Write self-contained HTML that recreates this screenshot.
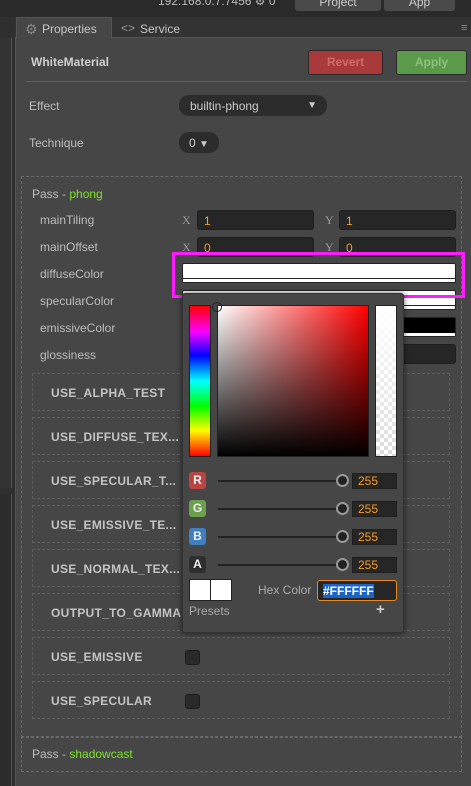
<!DOCTYPE html><html><head><style>
*{box-sizing:border-box;margin:0;padding:0}
body{width:471px;height:786px;background:#3c3c3c;font-family:"Liberation Sans",sans-serif;font-size:12px;color:#ccc;position:relative;overflow:hidden}
.a{position:absolute}
.lbl{position:absolute;font-size:12px;color:#bdbdbd}
.inp{position:absolute;background:#262626;border:1px solid #1e1e1e;border-radius:3px;color:#f39c2a;font-size:12px;padding:3px 6px;height:20px}
.xy{position:absolute;font-family:"Liberation Serif",serif;color:#999;font-size:12px}
.def{position:absolute;left:32px;width:418px;height:38px;border:1px dashed #5e5e5e}
.def span{position:absolute;left:18px;top:12px;font-weight:bold;color:#c4c4c4;font-size:12px;letter-spacing:.3px}
.col{position:absolute;left:182px;width:274px;height:20px;border:1px solid #222;border-radius:2px;background:#fff}
.col i{position:absolute;left:0;right:0;bottom:3px;height:1px;background:#222}
.badge{position:absolute;left:189px;width:17px;height:17px;border-radius:3px;color:#eee;font-weight:bold;font-size:12px;text-align:center;line-height:17px}
.trk{position:absolute;left:218px;width:124px;height:2px;background:#222}
.knob{position:absolute;left:336px;width:13px;height:13px;border-radius:50%;background:#222;border:2px solid #999}
.num{position:absolute;left:352px;width:45px;height:16px;background:#262626;border:1px solid #1e1e1e;color:#f39c2a;font-size:12px;padding:1px 5px;line-height:13px}
</style></head><body>
<div class="a" style="left:0;top:0;width:471px;height:17px;background:#2a2a2a"></div>
<div class="a" style="left:158px;top:-6px;color:#bbb;font-size:12px">192.168.0.7:7456 &#9881; 0</div>
<div class="a" style="left:295px;top:-2px;width:86px;height:13px;background:#4a4a4a;border-radius:3px;color:#ccc;text-align:center;font-size:12px;line-height:8px">Project</div>
<div class="a" style="left:384px;top:-2px;width:71px;height:13px;background:#4a4a4a;border-radius:3px;color:#ccc;text-align:center;font-size:12px;line-height:8px">App</div>
<div class="a" style="left:0;top:17px;width:15px;height:769px;background:#2f2f2f"></div>
<div class="a" style="left:0;top:38px;width:12px;height:450px;background:#333;border-right:1px solid #555"></div>
<div class="a" style="left:0;top:494px;width:12px;height:292px;background:#2c2c2c;border-right:1px solid #555"></div>
<div class="a" style="left:15px;top:17px;width:456px;height:769px;background:#464646;border-left:1px solid #555"></div>
<div class="a" style="left:15px;top:17px;width:456px;height:21px;background:#333;border-bottom:1px solid #555"></div>
<div class="a" style="left:16px;top:17px;width:96px;height:22px;background:#464646;border:1px solid #555;border-bottom:none"></div>
<div class="a" style="left:25px;top:21px;color:#888;font-size:14px">&#9881;</div>
<div class="a" style="left:42px;top:22px;color:#c8c8c8;font-size:12px">Properties</div>
<div class="a" style="left:121px;top:21px;color:#999;font-size:12px">&lt;&gt;</div>
<div class="a" style="left:140px;top:22px;color:#c8c8c8;font-size:12px">Service</div>
<div class="a" style="left:461px;top:22px;color:#888;font-size:11px">&#8801;</div>
<div class="a" style="left:31px;top:55px;font-weight:bold;color:#d0d0d0;font-size:12px">WhiteMaterial</div>
<div class="a" style="left:308px;top:50px;width:75px;height:25px;background:#a83a3c;border:1px solid #2a2a2a;border-radius:3px;color:#d06a6a;font-weight:bold;text-align:center;line-height:23px">Revert</div>
<div class="a" style="left:396px;top:50px;width:71px;height:25px;background:#5a9a4a;border:1px solid #2a2a2a;border-radius:3px;color:#8cc27c;font-weight:bold;text-align:center;line-height:23px">Apply</div>
<div class="a" style="left:26px;top:81px;width:441px;height:1px;background:#5e5e5e"></div>
<div class="lbl" style="left:29px;top:99px">Effect</div>
<div class="a" style="left:179px;top:95px;width:148px;height:21px;background:#2c2c2c;border-radius:10px;color:#ccc;padding:4px 11px">builtin-phong<span style="position:absolute;right:10px;top:5px;font-size:10px">&#9660;</span></div>
<div class="lbl" style="left:29px;top:136px">Technique</div>
<div class="a" style="left:179px;top:132px;width:40px;height:21px;background:#2c2c2c;border-radius:10px;color:#ccc;padding:4px 10px">0 <span style="font-size:10px">&#9660;</span></div>
<div class="a" style="left:21px;top:176px;width:441px;height:562px;border:1px dashed #6a6a6a"></div>
<div class="lbl" style="left:32px;top:187px">Pass - <span style="color:#7ee42e">phong</span></div>
<div class="lbl" style="left:40px;top:213px">mainTiling</div>
<div class="lbl" style="left:40px;top:240px">mainOffset</div>
<div class="lbl" style="left:40px;top:267px">diffuseColor</div>
<div class="lbl" style="left:40px;top:294px">specularColor</div>
<div class="lbl" style="left:40px;top:321px">emissiveColor</div>
<div class="lbl" style="left:40px;top:348px">glossiness</div>
<div class="xy" style="left:182px;top:213px">X</div><div class="inp" style="left:197px;top:210px;width:117px">1</div>
<div class="xy" style="left:325px;top:213px">Y</div><div class="inp" style="left:339px;top:210px;width:117px">1</div>
<div class="xy" style="left:182px;top:240px">X</div><div class="inp" style="left:197px;top:237px;width:117px">0</div>
<div class="xy" style="left:325px;top:240px">Y</div><div class="inp" style="left:339px;top:237px;width:117px">0</div>
<div class="col" style="top:263px"><i></i></div>
<div class="col" style="top:290px"><i></i></div>
<div class="col" style="top:317px;background:#000"><i style="background:#fff;height:3px;bottom:0"></i></div>
<div class="inp" style="left:182px;top:344px;width:274px"></div>
<div class="a" style="left:172px;top:252px;width:293px;height:46px;border:3px solid #ff1aff"></div>
<div class="def" style="top:373px"><span>USE_ALPHA_TEST</span></div>
<div class="def" style="top:417px"><span>USE_DIFFUSE_TEX...</span></div>
<div class="def" style="top:461px"><span>USE_SPECULAR_T...</span></div>
<div class="def" style="top:505px"><span>USE_EMISSIVE_TE...</span></div>
<div class="def" style="top:549px"><span>USE_NORMAL_TEX...</span></div>
<div class="def" style="top:593px"><span>OUTPUT_TO_GAMMA</span></div>
<div class="def" style="top:637px"><span>USE_EMISSIVE</span></div>
<div class="def" style="top:681px"><span>USE_SPECULAR</span></div>
<div class="a" style="left:185px;top:650px;width:15px;height:15px;background:#2a2a2a;border:1px solid #1c1c1c;border-radius:3px"></div>
<div class="a" style="left:185px;top:694px;width:15px;height:15px;background:#2a2a2a;border:1px solid #1c1c1c;border-radius:3px"></div>
<div class="a" style="left:21px;top:736px;width:441px;height:36px;border:1px dashed #6a6a6a"></div>
<div class="lbl" style="left:32px;top:747px">Pass - <span style="color:#7ee42e">shadowcast</span></div>
<div class="a" style="left:182px;top:293px;width:222px;height:340px;background:#464646;border:1px solid #333;border-radius:3px;box-shadow:0 0 6px rgba(0,0,0,.6)"></div>
<div class="a" style="left:189px;top:305px;width:22px;height:152px;border:1px solid #222;background:linear-gradient(#f00,#f0f 17%,#00f 33%,#0ff 50%,#0f0 67%,#ff0 83%,#f00)"></div>
<div class="a" style="left:217px;top:305px;width:152px;height:152px;border:1px solid #222;background:linear-gradient(rgba(0,0,0,0),#000),linear-gradient(90deg,#fff,#f00)"></div>
<div class="a" style="left:212px;top:302px;width:10px;height:10px;border:1.5px solid #222;border-radius:50%"></div>
<div class="a" style="left:375px;top:305px;width:22px;height:152px;border:1px solid #222;background:linear-gradient(#fff,rgba(255,255,255,.3)),repeating-conic-gradient(#ccc 0 25%,#fff 0 50%) 0 0/8px 8px"></div>
<div class="badge" style="top:472px;background:#b84444">R</div>
<div class="badge" style="top:500px;background:#6aa04e">G</div>
<div class="badge" style="top:528px;background:#3f7fc0">B</div>
<div class="badge" style="top:556px;background:#2e2e2e">A</div>
<div class="trk" style="top:480px"></div><div class="knob" style="top:474px"></div><div class="num" style="top:473px">255</div>
<div class="trk" style="top:508px"></div><div class="knob" style="top:502px"></div><div class="num" style="top:501px">255</div>
<div class="trk" style="top:536px"></div><div class="knob" style="top:530px"></div><div class="num" style="top:529px">255</div>
<div class="trk" style="top:564px"></div><div class="knob" style="top:558px"></div><div class="num" style="top:557px">255</div>
<div class="a" style="left:189px;top:579px;width:43px;height:22px;background:#fff;border:1px solid #222"></div>
<div class="a" style="left:210px;top:579px;width:1px;height:22px;background:#222"></div>
<div class="a" style="left:258px;top:583px;color:#aaa">Hex Color</div>
<div class="a" style="left:317px;top:580px;width:80px;height:21px;background:#262626;border:1px solid #e88a20;border-radius:3px;padding:3px 5px"><span style="background:#1a64c8;color:#fff;font-weight:bold">#FFFFFF</span></div>
<div class="a" style="left:189px;top:604px;color:#aaa">Presets</div>
<div class="a" style="left:376px;top:601px;color:#ccc;font-size:15px;font-weight:bold">+</div>
</body></html>
